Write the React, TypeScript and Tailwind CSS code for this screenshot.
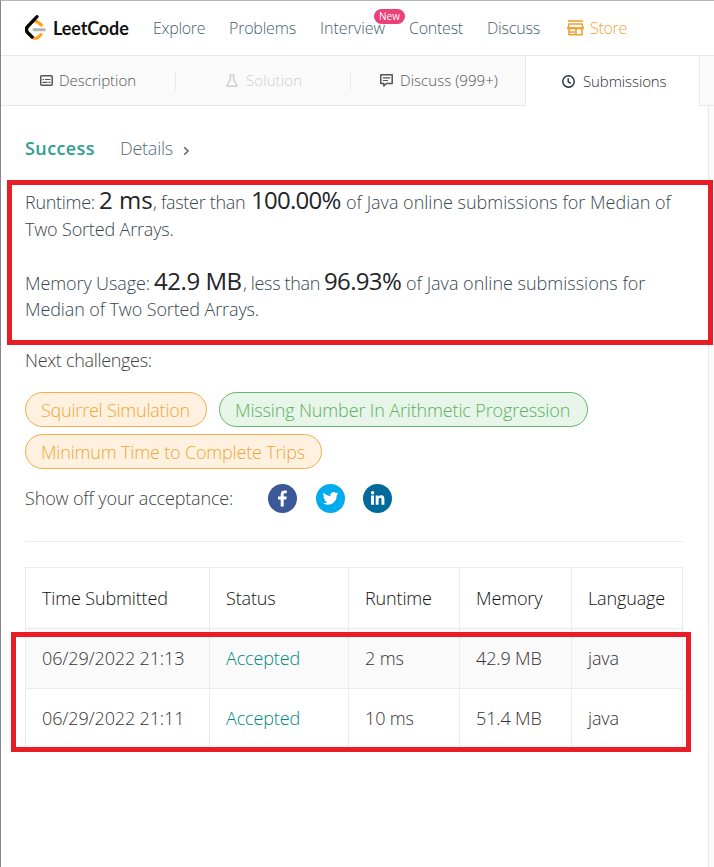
import type { ReactNode } from "react";

function Logo() {
  return (
    <svg viewBox="0 0 95 111" className="-mt-[1px] h-[25px] w-[21px] shrink-0">
      <path
        fill="#ffa116"
        stroke="#ffa116"
        strokeWidth="2"
        d="M67.506,83.066 C70,80.576 74.037,80.582 76.522,83.08 C79.008,85.578 79.002,89.622 76.508,92.112 L65.435,103.169 C55.219,113.37 38.56,113.518 28.172,103.513 C28.112,103.455 23.486,98.92 8.227,83.957 C-1.924,74.002 -2.936,58 6.616,47.846 L24.428,28.774 C33.91,18.621 51.387,17.512 62.227,26.278 L78.405,39.362 C81.144,41.577 81.572,45.598 79.361,48.342 C77.149,51.087 73.135,51.515 70.395,49.3 L54.218,36.217 C48.549,31.632 38.631,32.262 33.739,37.5 L15.927,56.572 C11.277,61.515 11.786,69.574 17.146,74.829 C28.351,85.816 36.987,94.284 36.997,94.294 C42.398,99.495 51.13,99.418 56.433,94.123 Z"
      />
      <path
        fill="#b3b3b3"
        d="M40.607,72.001 C37.086,72.001 34.231,69.142 34.231,65.614 C34.231,62.087 37.086,59.228 40.607,59.228 L87.624,59.228 C91.145,59.228 94,62.087 94,65.614 C94,69.142 91.145,72.001 87.624,72.001 Z"
      />
      <path
        fill="#000"
        stroke="#000"
        strokeWidth="3"
        d="M49.412,2.023 C51.817,-0.552 55.852,-0.686 58.423,1.722 C60.994,4.132 61.128,8.173 58.723,10.749 L15.928,56.572 C11.277,61.551 11.786,69.573 17.145,74.829 L36.909,94.209 C39.425,96.676 39.468,100.719 37.005,103.24 C34.542,105.76 30.506,105.804 27.99,103.336 L8.226,83.956 C-1.924,74.002 -2.936,58 6.617,47.846 Z"
      />
    </svg>
  );
}

function StoreIcon() {
  return (
    <svg viewBox="0 0 17 16" fill="none" stroke="#f0a030" className="mr-[6px] h-4 w-[17px]">
      <path d="M1 1h15" strokeWidth="1.6" />
      <path d="M2 4h13l1 4H1z" strokeWidth="1.6" />
      <path d="M2 8v6.700h13V8M2 12h7M9 8v6.700" strokeWidth="1.6" />
      <path d="M.3 8.300h16.400" strokeWidth="2" />
    </svg>
  );
}

function DescriptionIcon() {
  return (
    <svg viewBox="0 0 13 11" fill="none" stroke="currentColor" className="h-[11px] w-[13px]">
      <rect x=".75" y=".75" width="11.5" height="9.5" rx="1" strokeWidth="1.5" />
      <path d="M2.500 4.500h1.500M5 4.500h5.500M2.500 7.300h5M8.500 7.300h2" strokeWidth="1.2" />
    </svg>
  );
}

function FlaskIcon() {
  return (
    <svg viewBox="0 0 12 13" fill="none" stroke="currentColor" strokeWidth="1.4" className="h-[13px] w-3">
      <path d="M3.400 .9h5.200M4.400 1v4.400L1 11.200q-.3 1 .8 1h8.400q1.100 0 .8-1L7.600 5.400V1" />
    </svg>
  );
}

function DiscussIcon() {
  return (
    <svg viewBox="0 0 13 13" fill="none" stroke="currentColor" className="h-[13px] w-[13px]">
      <path d="M.8.8h11.400v8.700H6.500L3.800 12V9.500h-3z" strokeWidth="1.500" strokeLinejoin="round" />
      <path d="M3 3.800h7.200M3 6.500h5" strokeWidth="1.200" />
    </svg>
  );
}

function ClockIcon() {
  return (
    <svg viewBox="0 0 13 13" fill="none" stroke="currentColor" strokeWidth="1.400" className="h-[13px] w-[13px]">
      <circle cx="6.500" cy="6.500" r="5.700" />
      <path d="M6.200 3.200v3.700l2.600 1.500" />
    </svg>
  );
}

function Tab({ icon, label, className }: { icon: ReactNode; label: string; className: string }) {
  return (
    <div className={`flex h-full items-center text-[15px] leading-[51px] whitespace-nowrap ${className}`}>
      <span className="flex shrink-0 justify-center">{icon}</span>
      <span>{label}</span>
    </div>
  );
}

const challenges = [
  { title: "Squirrel Simulation", style: "w-[182px] pl-[15px] tracking-[-0.22px] border-[#f0ad4e] bg-[#fff1df] text-[#f0a637]" },
  { title: "Missing Number In Arithmetic Progression", style: "w-[369px] pl-[15px] tracking-[-0.14px] border-[#66b56b] bg-[#e8f5e9] text-[#5cb162]" },
  { title: "Minimum Time to Complete Trips", style: "w-[297px] pl-[15px] tracking-[-0.17px] border-[#f0ad4e] bg-[#fff1df] text-[#f0a637]" },
];

const rows = [
  ["06/29/2022 21:13", "Accepted", "2 ms", "42.9 MB", "java"],
  ["06/29/2022 21:11", "Accepted", "10 ms", "51.4 MB", "java"],
];

const columns = "grid grid-cols-[184px_139px_111px_112px_111px]";
const cell = "border-r border-[#ebebeb] pl-4 tracking-[-0.14px]";

export default function App() {
  return (
    <div className="relative flex h-[867px] w-[714px] flex-col overflow-hidden border-t border-l border-t-[#b1b5bc] border-l-[#85858a] bg-white font-['Open_Sans','Noto_Sans',sans-serif] font-light text-[#37474f]">
      <header className="flex h-[55px] shrink-0 items-center border-b border-[#e8e8e8] pl-6 text-base leading-[55px] whitespace-nowrap text-[#455f6b]">
        <Logo />
        <span className="ml-[7px] w-[100px] font-['Lato',sans-serif] text-[18px] font-bold tracking-[-0.12px] text-[#111]">LeetCode</span>
        <span className="w-[76px] tracking-[-0.3px]">Explore</span>
        <span className="w-[91px] tracking-[-0.2px]">Problems</span>
        <span className="relative w-[89px]">
          Interview
          <span className="absolute top-[8px] left-[54px] h-[15px] w-[31px] rounded-full bg-[#ec407a] text-center font-['Open_Sans',sans-serif] text-[10px] leading-[15px] font-medium text-white">
            New
          </span>
        </span>
        <span className="w-[78px] tracking-[-0.25px]">Contest</span>
        <span className="w-[80px] tracking-[-0.2px]">Discuss</span>
        <span className="flex items-center text-[#f0a637]">
          <StoreIcon />
          <span className="tracking-[-0.3px]">Store</span>
        </span>
      </header>

      <nav className="flex h-[50px] shrink-0 items-center bg-[#fafafa]">
        <div className="flex h-full w-[524px] items-center border-b border-[#e8e8e8] text-[#555]">
          <Tab icon={<DescriptionIcon />} label="Description" className="w-[174px] gap-[6px] pl-[39px]" />
          <div className="h-[19px] w-px bg-[#e8e8e8]" />
          <Tab icon={<FlaskIcon />} label="Solution" className="w-[174px] gap-2 pl-[50px] tracking-[0.1px] text-[#cfcfcf]" />
          <div className="h-[19px] w-px bg-[#e8e8e8]" />
          <Tab icon={<DiscussIcon />} label="Discuss (999+)" className="w-[174px] gap-[7px] pl-[29px] tracking-[0.05px]" />
        </div>
        <Tab icon={<ClockIcon />} label="Submissions" className="w-[175px] gap-2 border-x border-[#e8e8e8] bg-white pl-9 tracking-[-0.1px] text-[#1f2d34]" />
        <div className="h-full flex-1 border-b border-[#e8e8e8]" />
      </nav>

      <div className="flex flex-1 bg-[#fafafa]">
        <main className="w-[708px] border-r border-[#e8e8e8] bg-white pt-[29px] pl-6 text-[18px] leading-[26px] whitespace-nowrap">
          <div className="flex h-[52px] items-start">
            <span className="w-[95px] font-semibold tracking-[0.4px] text-[#2f9e92]">Success</span>
            <span className="w-[62px] tracking-[-0.25px] text-[#546e7a]">Details</span>
            <svg viewBox="0 0 8 10" fill="none" stroke="#546e7a" strokeWidth="1.600" className="mt-[11px] h-[10px] w-2">
              <path d="M2.200 1.200 6 5 2.200 8.800" />
            </svg>
          </div>

          <div className="flex h-[29px] items-baseline">
            <span className="w-[74px] tracking-[-0.3px]">Runtime:</span>
            <span className="w-[54px] text-2xl leading-[26px] font-normal text-[#212529]">2 ms</span>
            <span className="w-[98px] tracking-[-0.3px]">, faster than</span>
            <span className="w-[95px] text-2xl leading-[26px] font-normal tracking-[-0.75px] text-[#212529]">100.00%</span>
            <span>of Java online submissions for Median of</span>
          </div>
          <div className="h-[52px] tracking-[-0.17px]">Two Sorted Arrays.</div>
          <div className="flex h-[28px] items-baseline">
            <span className="w-[129px] tracking-[-0.1px]">Memory Usage:</span>
            <span className="w-[89px] text-2xl leading-[26px] font-normal tracking-[-0.45px] text-[#212529]">42.9 MB</span>
            <span className="w-[81px] tracking-[-0.35px]">, less than</span>
            <span className="w-[82px] text-2xl leading-[26px] font-normal tracking-[-0.65px] text-[#212529]">96.93%</span>
            <span>of Java online submissions for</span>
          </div>
          <div className="h-[51px] tracking-[-0.12px]">Median of Two Sorted Arrays.</div>

          <div className="h-[45px] tracking-[-0.32px] text-[#424242]">Next challenges:</div>
          <div className="flex w-[658px] flex-wrap gap-x-3 gap-y-[7px]">
            {challenges.map((c) => (
              <span key={c.title} className={`h-[35px] rounded-full border leading-[35px] ${c.style}`}>
                {c.title}
              </span>
            ))}
          </div>

          <div className="mt-[15px] flex h-[29px] items-center text-[#424242]">
            <span className="-mt-px w-[243px] tracking-[-0.15px]">Show off your acceptance:</span>
            <svg viewBox="0 0 29 29" className="mr-[19px] h-[29px] w-[29px]">
              <circle cx="14.500" cy="14.500" r="14.500" fill="#3b5998" />
              <path fill="#fff" d="M15.700 22.500v-7h2.600l.4-3h-3v-1.800c0-.9.3-1.400 1.500-1.400h1.600V6.700c-.3 0-1.200-.1-2.300-.1-2.300 0-3.800 1.400-3.800 3.800v2.100H10v3h2.700v7z" />
            </svg>
            <svg viewBox="0 0 29 29" className="mr-[18px] h-[29px] w-[29px]">
              <circle cx="14.500" cy="14.500" r="14.500" fill="#00aced" />
              <g transform="translate(6.700 6.600) scale(.65)">
                <path
                  fill="#fff"
                  d="M23.950 4.570a10 10 0 0 1-2.820.77 4.960 4.960 0 0 0 2.160-2.720c-.95.55-2 .95-3.130 1.180a4.920 4.920 0 0 0-8.380 4.480C7.690 8.100 4.070 6.130 1.640 3.160a4.820 4.820 0 0 0-.67 2.480c0 1.710.87 3.210 2.190 4.100a4.900 4.900 0 0 1-2.230-.62v.06a4.920 4.920 0 0 0 3.950 4.830 5 5 0 0 1-2.210.08 4.940 4.940 0 0 0 4.600 3.420A9.870 9.870 0 0 1 0 19.540a14 14 0 0 0 7.550 2.210c9.050 0 14-7.500 14-13.980 0-.21 0-.42-.02-.63a9.940 9.940 0 0 0 2.460-2.550z"
                />
              </g>
            </svg>
            <svg viewBox="0 0 29 29" className="h-[29px] w-[29px]">
              <circle cx="14.500" cy="14.500" r="14.500" fill="#006a9b" />
              <g fill="#fff">
                <circle cx="9.600" cy="8.700" r="1.700" />
                <path d="M8.100 11.500H11v9.200H8.100zM12.700 11.500h2.800v1.300c.5-.9 1.500-1.500 2.700-1.500 2.400 0 3.200 1.500 3.200 4v5.400h-2.900v-4.900c0-1.200-.2-2.100-1.300-2.100-1.200 0-1.600.9-1.600 2.100v4.900h-2.900z" />
              </g>
            </svg>
          </div>

          <hr className="mt-7 w-[658px] border-[#ebebeb]" />

          <div className="mt-[25px] w-[658px] border-t border-l border-[#ebebeb]">
            <div className={`${columns} h-[61px] border-b border-[#ebebeb] leading-[61px] text-[#111]`}>
              {["Time Submitted", "Status", "Runtime", "Memory", "Language"].map((h) => (
                <span key={h} className={cell}>{h}</span>
              ))}
            </div>
            {rows.map((r, i) => (
              <div key={r[0]} className={`${columns} h-[60px] border-b border-[#ebebeb] leading-[59px] text-[#333] ${i === 0 ? "bg-[#fafafa]" : ""}`}>
                {r.map((v, j) => (
                  <span key={j} className={`${cell} ${j === 1 ? "text-[#00897b]" : ""}`}>{v}</span>
                ))}
              </div>
            ))}
          </div>
        </main>
      </div>

      <div className="pointer-events-none absolute top-[179px] left-[6px] h-[165px] w-[706px] border-[5px] border-[#e81d25]" />
      <div className="pointer-events-none absolute top-[631px] left-[10px] h-[120px] w-[680px] border-[5px] border-[#e81d25]" />
    </div>
  );
}
